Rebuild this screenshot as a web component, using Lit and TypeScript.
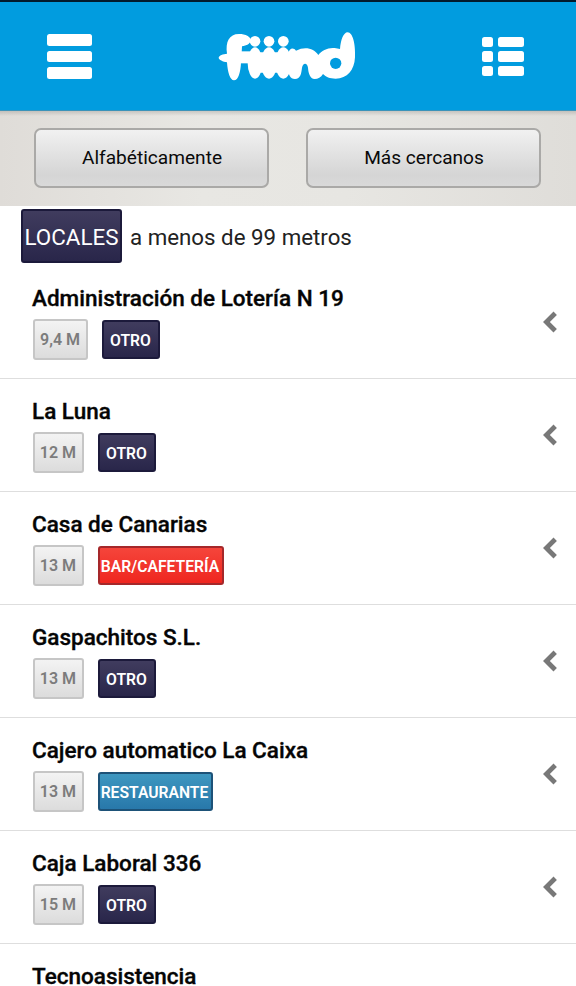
import { LitElement, html, css, svg, nothing } from "lit";
import { customElement, property } from "lit/decorators.js";

type Kind = "otro" | "bar" | "rest";
interface Place { name: string; dist?: string; tag?: string; kind?: Kind; }

const places: Place[] = [
  { name: "Administración de Lotería N 19", dist: "9,4 M", tag: "OTRO", kind: "otro" },
  { name: "La Luna", dist: "12 M", tag: "OTRO", kind: "otro" },
  { name: "Casa de Canarias", dist: "13 M", tag: "BAR/CAFETERÍA", kind: "bar" },
  { name: "Gaspachitos S.L.", dist: "13 M", tag: "OTRO", kind: "otro" },
  { name: "Cajero automatico La Caixa", dist: "13 M", tag: "RESTAURANTE", kind: "rest" },
  { name: "Caja Laboral 336", dist: "15 M", tag: "OTRO", kind: "otro" },
  { name: "Tecnoasistencia" },
];

@customElement("place-row")
class PlaceRow extends LitElement {
  @property({ attribute: false }) place!: Place;

  static styles = css`
    :host {
      display: flex;
      justify-content: space-between;
      align-items: center;
      box-sizing: border-box;
      flex: none;
      height: 113px;
      padding: 0 18px 0 32px;
      border-bottom: 1px solid #dedede;
    }
    .info { display: flex; flex-direction: column; height: 100%; }
    .name {
      margin-top: 18px;
      height: 28px;
      line-height: 28px;
      font-size: 22.5px;
      font-weight: 500;
      color: #050505;
      white-space: nowrap;
      -webkit-text-stroke: 0.35px #050505;
    }
    .tags { display: flex; align-items: flex-start; gap: 14px; margin: 7px 0 0 1px; }
    .dist, .tag {
      box-sizing: border-box;
      display: flex;
      align-items: center;
      justify-content: center;
      border-radius: 3px;
      font-weight: 600;
      white-space: nowrap;
    }
    .dist {
      height: 41px;
      width: 51px;
      padding-right: 1px;
      border: 2px solid #c6c6c6;
      background: linear-gradient(#f3f3f3, #dcdcdc);
      color: #7c7c7c;
      font-size: 16px;
    }
    .dist.wide { width: 55px; }
    .tag { height: 39px; margin-top: 1px; color: #fff; font-size: 15.7px; padding: 1px 2px 0 0; }
    .otro { width: 58px; padding-right: 1px; border: 2px solid #1c1a3b; background: linear-gradient(#403c5e, #29264a); }
    .bar { width: 126px; border: 2px solid #a5282a; background: linear-gradient(#f5453b, #ef261f); }
    .rest { width: 115px; border: 2px solid #1d5278; background: linear-gradient(#3e97c0, #2878aa); }
  `;

  render() {
    const p = this.place;
    return html`
      <div class="info">
        <div class="name">${p.name}</div>
        ${p.dist
          ? html`<div class="tags">
              <span class="dist ${p.dist.length > 4 ? "wide" : ""}">${p.dist}</span>
              <span class="tag ${p.kind}">${p.tag}</span>
            </div>`
          : nothing}
      </div>
      <svg width="16" height="24" viewBox="0 0 16 24">
        <path d="M13.2 3.2 4.4 12l8.8 8.8" fill="none" stroke="#787878" stroke-width="4.8" />
      </svg>
    `;
  }
}

const logo = svg`
  <g fill="#fff">
    <path d="M63 101C58 66 69 42 99 42C119 42 134 50 134 60C134 72 121 77 108 79L107 98C119 99 128 105 128 114C127 124 116 127 105 128C104 155 97 181 84 181C72 181 65 157 63 127C51 125 38 119 38 113C39 106 51 102 63 101Z"/>
    <circle cx="147" cy="64" r="16"/>
    <circle cx="189" cy="64" r="16"/>
    <circle cx="232" cy="64" r="16"/>
    <ellipse cx="147" cy="129" rx="22" ry="47"/>
    <ellipse cx="189" cy="129" rx="24" ry="47"/>
    <ellipse cx="232" cy="129" rx="24" ry="47"/>
    <path d="M105 94H150V130H105Z"/>
    <path d="M147 97H268V158H147Z"/>
    <path d="M247 100C250 83 263 81 270 92C296 78 324 84 337 105C347 91 366 82 386 84L402 87C404 61 412 37 425 37C440 37 449 72 447 112C445 151 424 176 389 176C371 176 360 171 351 162C345 173 336 177 326 177C312 177 307 158 306 143C304 128 291 127 288 143C286 160 284 176 267 177C252 177 247 163 247 147Z"/>
  </g>
  <circle cx="389" cy="130" r="17" fill="#019cdf"/>
`;

@customElement("app-root")
class AppRoot extends LitElement {
  static styles = css`
    :host {
      display: flex;
      flex-direction: column;
      width: 576px;
      height: 986px;
      overflow: hidden;
      background: #fff;
      font-family: Roboto, "Liberation Sans", sans-serif;
    }
    header {
      flex: none;
      box-sizing: border-box;
      height: 111px;
      border-top: 2px solid #021a2c;
      border-bottom: 1px solid #3b93b9;
      background: #019cdf;
      display: flex;
      align-items: center;
      justify-content: space-between;
      padding: 0 52px 0 47px;
    }
    .menu { width: 45px; display: flex; flex-direction: column; gap: 5px; margin-top: 1px; }
    .menu i { height: 11.8px; border-radius: 2.5px; background: #fff; }
    .logo { display: block; margin: 3px 0 0 2px; }
    .list { width: 42px; display: grid; grid-template-columns: 11px 26px; gap: 4px 5px; margin-top: 1px; }
    .list i { height: 10.4px; border-radius: 2.5px; background: #fff; }
    .filters {
      flex: none;
      box-sizing: border-box;
      height: 95px;
      display: flex;
      justify-content: space-between;
      padding: 17px 35px 0 34px;
      background:
        linear-gradient(rgba(110, 105, 100, 0.25), rgba(110, 105, 100, 0) 5px),
        linear-gradient(90deg, #dfdcd8, #e8e7e3 35%, #e7e6e2 60%, #dfddd9);
    }
    button {
      box-sizing: border-box;
      width: 235px;
      height: 60px;
      padding: 0 0 1px 1px;
      border: 2px solid #aaa9a7;
      border-radius: 7px;
      background: linear-gradient(#f1f1f1, #d5d5d5 80%, #d9d9d9);
      font: 400 19.1px Roboto, sans-serif;
      color: #0a0a0a;
    }
    .heading { flex: none; display: flex; align-items: center; height: 60px; padding-left: 21px; gap: 8px; color: #222; }
    .locales {
      box-sizing: border-box;
      width: 101px;
      height: 54px;
      display: flex;
      align-items: center;
      justify-content: center;
      border: 2px solid #1c1a3b;
      border-radius: 3px;
      background: linear-gradient(#403c5e, #29264a);
      color: #fff;
      font-size: 22.4px;
      padding-top: 1px;
    }
    .near { font-size: 22.3px; white-space: nowrap; margin-top: 2px; }
  `;

  render() {
    return html`
      <header>
        <div class="menu"><i></i><i></i><i></i></div>
        <svg class="logo" width="165" height="75" viewBox="0 0 495 225">${logo}</svg>
        <div class="list"><i></i><i></i><i></i><i></i><i></i><i></i></div>
      </header>
      <div class="filters">
        <button>Alfabéticamente</button>
        <button>Más cercanos</button>
      </div>
      <div class="heading">
        <span class="locales">LOCALES</span>
        <span class="near">a menos de 99 metros</span>
      </div>
      ${places.map((p) => html`<place-row .place=${p}></place-row>`)}
    `;
  }
}
